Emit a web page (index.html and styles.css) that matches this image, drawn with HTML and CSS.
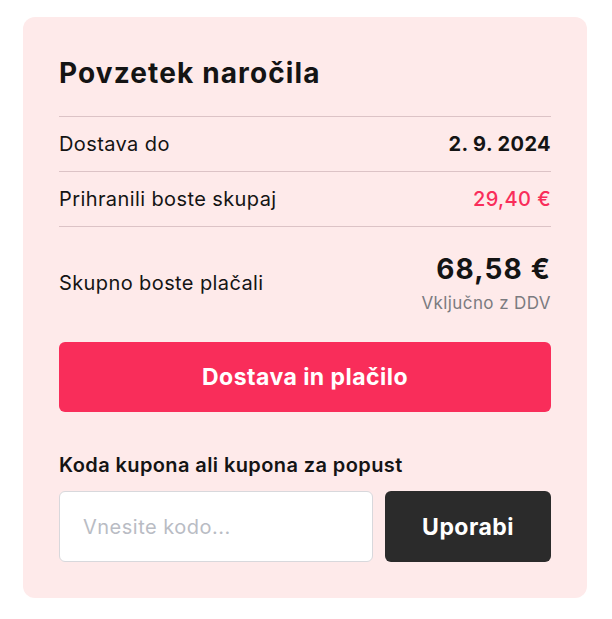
FILE: index.html
```html
<!DOCTYPE html>
<html lang="sl">
<head>
<meta charset="utf-8">
<link rel="stylesheet" href="styles.css">
</head>
<body>
<div class="card">
  <h2 class="title">Povzetek naročila</h2>
  <div class="row">
    <span class="label">Dostava do</span>
    <span class="value strong">2. 9. 2024</span>
  </div>
  <div class="row">
    <span class="label">Prihranili boste skupaj</span>
    <span class="value red">29,40 €</span>
  </div>
  <div class="total">
    <span class="label">Skupno boste plačali</span>
    <div class="total-right">
      <span class="price">68,58 €</span>
      <span class="vat">Vključno z DDV</span>
    </div>
  </div>
  <button class="primary">Dostava in plačilo</button>
  <div class="coupon-label">Koda kupona ali kupona za popust</div>
  <div class="coupon">
    <input class="coupon-input" type="text" placeholder="Vnesite kodo...">
    <button class="apply">Uporabi</button>
  </div>
</div>
</body>
</html>
```
FILE: styles.css
```css
* { box-sizing: border-box; }
body {
  margin: 0;
  background: #fff;
  font-family: Inter, "Noto Sans", sans-serif;
  color: #141414;
  letter-spacing: 0.025em;
}
.card {
  margin: 17px 0 0 23px;
  width: 564px;
  background: #feeaea;
  border-radius: 12px;
  padding: 40px 36px 36px 36px;
}
.title {
  margin: 0;
  font-size: 28px;
  line-height: 32px;
  font-weight: 700;
  letter-spacing: 0.04em;
  padding-bottom: 27px;
  border-bottom: 1px solid #dcc3c6;
}
.row {
  display: flex;
  justify-content: space-between;
  align-items: center;
  height: 55px;
  border-bottom: 1px solid #dcc3c6;
  font-size: 20px;
}
.label { font-size: 20px; }
.strong { font-weight: 700; }
.red { color: #f92d5a; font-weight: 500; }
.total {
  display: flex;
  justify-content: space-between;
  align-items: center;
  padding-top: 25px;
}
.total-right {
  display: flex;
  flex-direction: column;
  align-items: flex-end;
}
.price {
  font-size: 28px;
  line-height: 34px;
  font-weight: 700;
  letter-spacing: 0.04em;
}
.vat {
  margin-top: 7px;
  font-size: 17px;
  line-height: 20px;
  color: #7b7b80;
}
.primary {
  display: block;
  width: 100%;
  height: 70px;
  margin-top: 29px;
  border: 0;
  border-radius: 6px;
  background: #f92d5a;
  color: #fff;
  font-family: inherit;
  font-size: 23px;
  font-weight: 700;
  letter-spacing: 0.02em;
}
.coupon-label {
  margin-top: 41px;
  font-size: 20px;
  line-height: 24px;
  font-weight: 600;
}
.coupon {
  display: flex;
  gap: 12px;
  margin-top: 14px;
}
.coupon-input {
  flex: 1 1 auto;
  min-width: 0;
  height: 71px;
  border: 1px solid #d8d8dc;
  border-radius: 6px;
  background: #fff;
  padding: 0 23px;
  font-family: inherit;
  font-size: 20px;
  letter-spacing: 0.025em;
  color: #141414;
}
.coupon-input::placeholder { color: #b9bcc4; }
.apply {
  flex: none;
  width: 166px;
  height: 71px;
  border: 0;
  border-radius: 6px;
  background: #2b2b2b;
  color: #fff;
  font-family: inherit;
  font-size: 23px;
  font-weight: 700;
  letter-spacing: 0.02em;
}
```
